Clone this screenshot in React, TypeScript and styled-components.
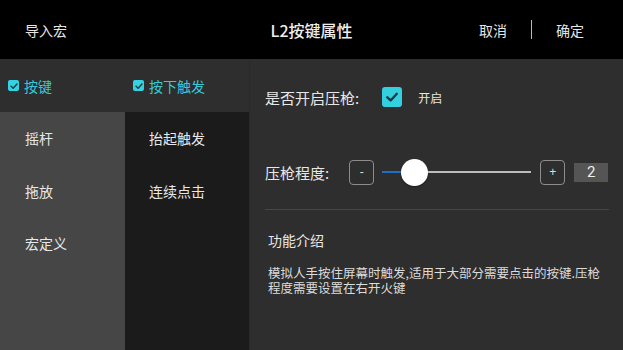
import React from "react";
import styled, { createGlobalStyle } from "styled-components";

const Global = createGlobalStyle`
  html, body { margin: 0; padding: 0; background: #2e2e2e; }
  body { font-family: "Noto Sans CJK SC", "Noto Sans", sans-serif; }
  * { box-sizing: border-box; }
`;

const Page = styled.div`
  width: 623px;
  height: 350px;
  display: flex;
  flex-direction: column;
  overflow: hidden;
  background: #2e2e2e;
`;

const TopBar = styled.div`
  height: 59px;
  background: #000;
  display: flex;
  align-items: center;
  position: relative;
  padding: 0 39px 0 25px;
  color: #e6e6e6;
  font-size: 14px;
`;

const Title = styled.div`
  position: absolute;
  left: 0;
  right: 0;
  text-align: center;
  font-size: 16px;
  font-weight: 500;
  color: #eee;
  pointer-events: none;
`;

const TopRight = styled.div`
  margin-left: auto;
  display: flex;
  align-items: center;
  gap: 24px;
`;

const VSep = styled.div`
  width: 1px;
  height: 19px;
  background: #bbb;
`;

const Body = styled.div`
  flex: 1;
  display: flex;
`;

const Column = styled.div<{ $bg: string; $w: number }>`
  width: ${(p) => p.$w}px;
  flex-shrink: 0;
  display: flex;
  flex-direction: column;
  background: ${(p) => p.$bg};
`;

const TabHead = styled.div<{ $pl: number }>`
  height: 53px;
  background: #2e2e2e;
  display: flex;
  align-items: center;
  gap: 5px;
  padding-left: ${(p) => p.$pl}px;
  color: #37c9d8;
  font-size: 14px;
`;

const SmallCheck = styled.span`
  width: 11px;
  height: 11px;
  border-radius: 2px;
  background: #33d3e2;
  display: inline-flex;
  align-items: center;
  justify-content: center;
`;

const Item = styled.div<{ $pl: number }>`
  height: 52.5px;
  display: flex;
  align-items: center;
  padding-left: ${(p) => p.$pl}px;
  color: #e8e8e8;
  font-size: 14px;
`;

const Panel = styled.div`
  flex: 1;
  padding: 0 14px 0 15px;
  display: flex;
  flex-direction: column;
  border-left: 1px solid #2a2a2a;
`;

const Row = styled.div<{ $h: number }>`
  height: ${(p) => p.$h}px;
  display: flex;
  align-items: center;
  color: #e8e8e8;
  font-size: 15px;
  white-space: nowrap;
  & > * { flex-shrink: 0; }
`;

const RowLabel = styled.span<{ $gap: number }>`
  margin-right: ${(p) => p.$gap}px;
`;

const BigCheck = styled.span`
  width: 20px;
  height: 20px;
  border-radius: 3px;
  background: #34d0e0;
  display: inline-flex;
  align-items: center;
  justify-content: center;
`;

const SmallLabel = styled.span`
  font-size: 12px;
  margin-left: 16px;
  color: #e6e6e6;
`;

const StepBtn = styled.span`
  width: 25px;
  height: 25px;
  border: 1.5px solid #8c8c8c;
  border-radius: 4px;
  display: inline-flex;
  align-items: center;
  justify-content: center;
  color: #ddd;
  font-size: 12px;
  font-family: "Liberation Sans", sans-serif;
`;

const Track = styled.div`
  position: relative;
  width: 149px;
  height: 2px;
  background: #bdbdbd;
  margin: 0 9px 0 8px;
`;

const Fill = styled.div`
  position: absolute;
  left: 0;
  top: 0;
  height: 2px;
  background: #1e6fc8;
`;

const Thumb = styled.div`
  position: absolute;
  top: -12.5px;
  width: 27px;
  height: 27px;
  border-radius: 50%;
  background: #fff;
  box-shadow: 0 1px 2px rgba(0, 0, 0, 0.4);
`;

const ValueBox = styled.span`
  width: 34px;
  height: 19px;
  margin-left: 9px;
  background: #555;
  color: #eee;
  font-size: 15px;
  font-family: "Roboto", sans-serif;
  display: inline-flex;
  align-items: center;
  justify-content: center;
`;

const Divider = styled.div`
  height: 1px;
  background: #474747;
`;

const SectionTitle = styled.div`
  margin-top: 20px;
  padding-left: 3px;
  font-size: 14px;
  color: #e8e8e8;
`;

const Desc = styled.div`
  margin-top: 15px;
  padding-left: 3px;
  font-size: 12.5px;
  line-height: 15px;
  color: #dcdcdc;
  width: 335px;
`;

const Tick = ({ size, color }: { size: number; color: string }) => (
  <svg width={size} height={size} viewBox="0 0 12 12">
    <path d="M2.5 6.2 L5 8.6 L9.6 3.6" fill="none" stroke={color} strokeWidth={1.8} strokeLinecap="round" strokeLinejoin="round" />
  </svg>
);

export default function App() {
  const pct = 0.22;
  return (
    <Page>
      <Global />
      <TopBar>
        <span>导入宏</span>
        <Title>L2按键属性</Title>
        <TopRight>
          <span>取消</span>
          <VSep />
          <span>确定</span>
        </TopRight>
      </TopBar>
      <Body>
        <Column $bg="#464646" $w={125}>
          <TabHead $pl={8}>
            <SmallCheck>
              <Tick size={10} color="#1f3c44" />
            </SmallCheck>
            按键
          </TabHead>
          <Item $pl={25}>摇杆</Item>
          <Item $pl={25}>拖放</Item>
          <Item $pl={25}>宏定义</Item>
        </Column>
        <Column $bg="#1b1b1b" $w={124}>
          <TabHead $pl={8}>
            <SmallCheck>
              <Tick size={10} color="#1f3c44" />
            </SmallCheck>
            按下触发
          </TabHead>
          <Item $pl={24}>抬起触发</Item>
          <Item $pl={24}>连续点击</Item>
        </Column>
        <Panel>
          <Row $h={76}>
            <RowLabel $gap={23}>是否开启压枪:</RowLabel>
            <BigCheck>
              <Tick size={16} color="#1d3a44" />
            </BigCheck>
            <SmallLabel>开启</SmallLabel>
          </Row>
          <Row $h={74}>
            <RowLabel $gap={20}>压枪程度:</RowLabel>
            <StepBtn>-</StepBtn>
            <Track>
              <Fill style={{ width: `${pct * 100}%` }} />
              <Thumb style={{ left: `calc(${pct * 100}% - 13.5px)` }} />
            </Track>
            <StepBtn>+</StepBtn>
            <ValueBox>2</ValueBox>
          </Row>
          <Divider />
          <SectionTitle>功能介绍</SectionTitle>
          <Desc>模拟人手按住屏幕时触发,适用于大部分需要点击的按键.压枪程度需要设置在右开火键</Desc>
        </Panel>
      </Body>
    </Page>
  );
}
